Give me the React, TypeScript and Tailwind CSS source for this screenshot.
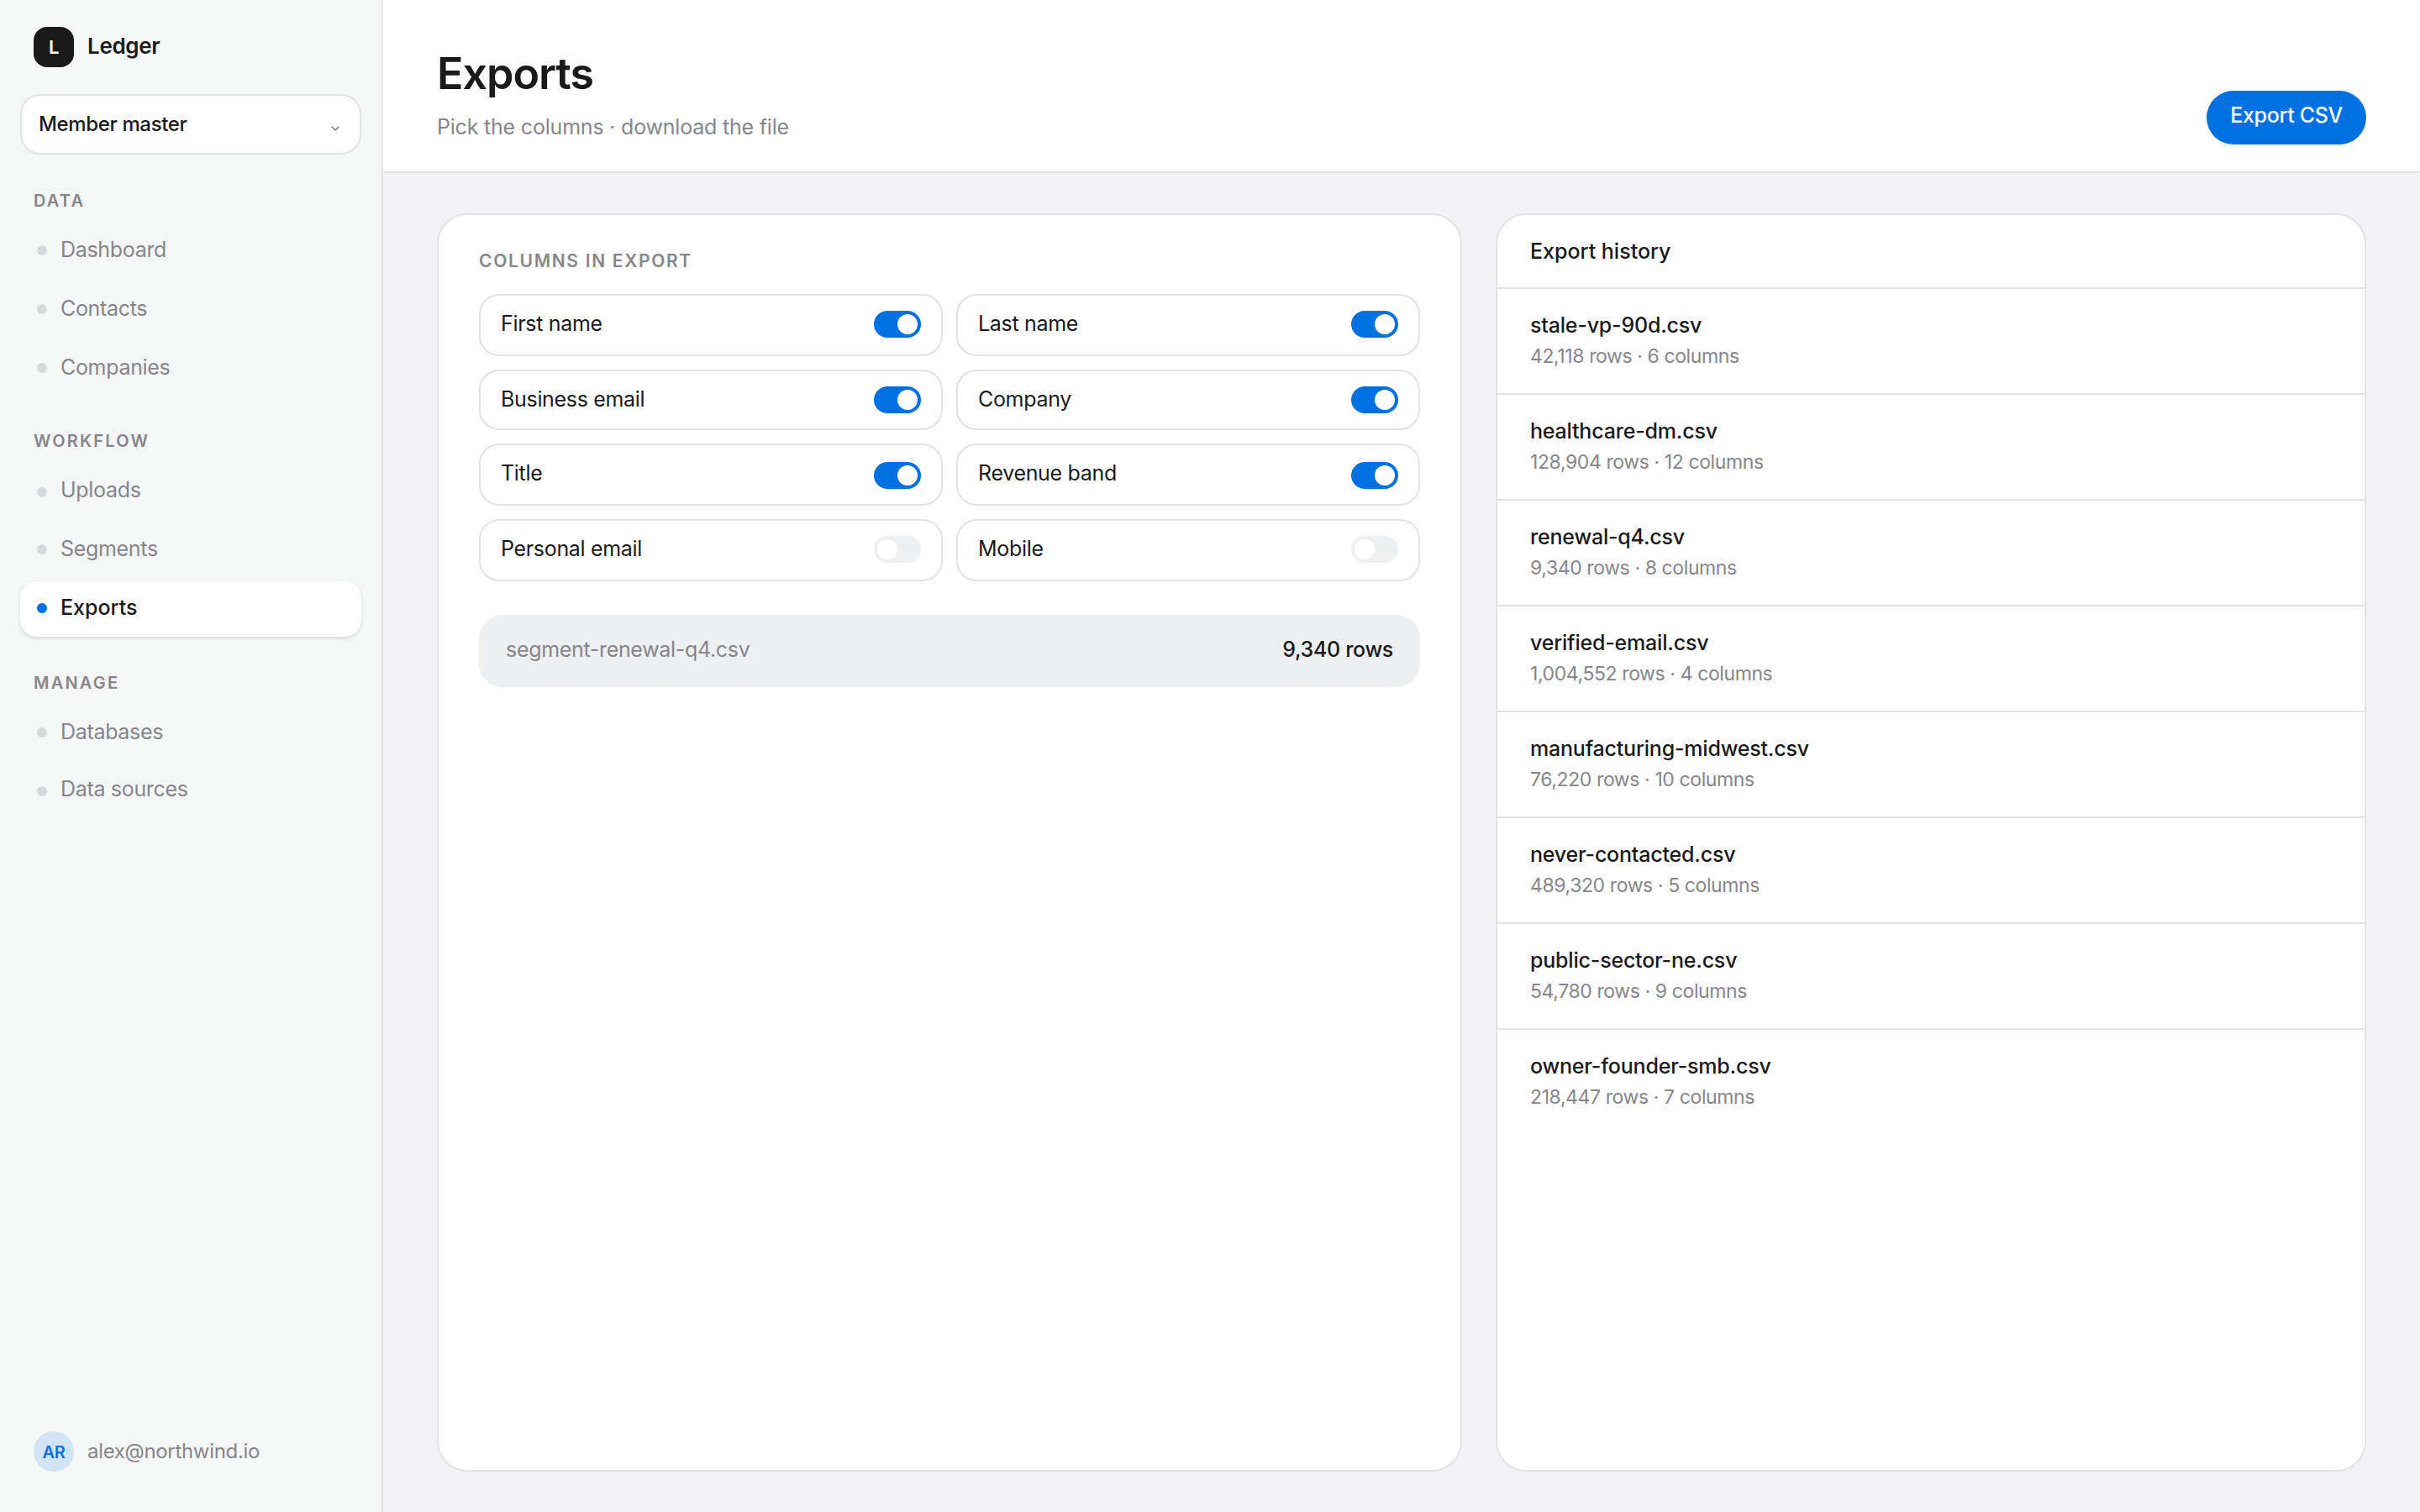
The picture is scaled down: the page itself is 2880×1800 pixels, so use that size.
import clsx from 'clsx';

const sections = [
  { title: 'Data', items: ['Dashboard', 'Contacts', 'Companies'] },
  { title: 'Workflow', items: ['Uploads', 'Segments', 'Exports'] },
  { title: 'Manage', items: ['Databases', 'Data sources'] },
];

const columns = [
  { name: 'First name', on: true },
  { name: 'Last name', on: true },
  { name: 'Business email', on: true },
  { name: 'Company', on: true },
  { name: 'Title', on: true },
  { name: 'Revenue band', on: true },
  { name: 'Personal email', on: false },
  { name: 'Mobile', on: false },
];

const history = [
  { file: 'stale-vp-90d.csv', meta: '42,118 rows · 6 columns' },
  { file: 'healthcare-dm.csv', meta: '128,904 rows · 12 columns' },
  { file: 'renewal-q4.csv', meta: '9,340 rows · 8 columns' },
  { file: 'verified-email.csv', meta: '1,004,552 rows · 4 columns' },
  { file: 'manufacturing-midwest.csv', meta: '76,220 rows · 10 columns' },
  { file: 'never-contacted.csv', meta: '489,320 rows · 5 columns' },
  { file: 'public-sector-ne.csv', meta: '54,780 rows · 9 columns' },
  { file: 'owner-founder-smb.csv', meta: '218,447 rows · 7 columns' },
];

function Toggle({ on }: { on: boolean }) {
  return (
    <span className={clsx('flex h-4 w-7 rounded-full p-0.5', on ? 'justify-end bg-[#0071e3]' : 'justify-start bg-[#eeeff1]')}>
      <span className="size-3 rounded-full bg-white" />
    </span>
  );
}

function Sidebar() {
  return (
    <aside className="flex w-[228px] shrink-0 flex-col border-r border-[#e3e3e5] bg-[#f5f7f7] px-3 pt-4 pb-6">
      <div className="flex h-6 items-center gap-2 px-2">
        <span className="flex size-6 items-center justify-center rounded-lg bg-[#1a1a1a] text-[11px] font-semibold text-white">L</span>
        <span className="text-[13px] font-semibold">Ledger</span>
      </div>

      <div className="mt-4 flex h-9 items-center justify-between rounded-xl border border-[#e3e3e5] bg-white px-2.5">
        <span className="text-[12px] font-medium tracking-[-0.015em]">Member master</span>
        <svg className="mt-[5px] mr-0.5 h-[3px] w-[5px] text-[#86868b]" viewBox="0 0 5 3" fill="none" stroke="currentColor" strokeWidth="0.8">
          <path d="M0.4 0.4 2.5 2.4 4.6 0.4" />
        </svg>
      </div>

      <nav>
        {sections.map((section) => (
          <div key={section.title} className="pt-5">
            <h2 className="px-2 text-[10px] font-semibold tracking-[0.11em] text-[#86868b] uppercase">{section.title}</h2>
            <div className="mt-1.5 flex flex-col gap-0.5">
              {section.items.map((item) => {
                const active = item === 'Exports';
                return (
                  <a
                    key={item}
                    className={clsx(
                      'flex items-center gap-2 rounded-[10px] px-2.5 py-[7px] text-[12.5px]',
                      active ? 'bg-white font-medium tracking-normal shadow-[0_1px_2px_rgba(0,0,0,0.12)]' : 'text-[#86868b]',
                    )}
                  >
                    <span className={clsx('size-1.5 rounded-full', active ? 'bg-[#0071e3]' : 'bg-[#d8d9da]')} />
                    {item}
                  </a>
                );
              })}
            </div>
          </div>
        ))}
      </nav>

      <div className="mt-auto flex items-center gap-2 px-2">
        <span className="flex size-6 items-center justify-center rounded-full bg-[#d2e3f4] text-[10px] font-semibold text-[#0071e3]">AR</span>
        <span className="text-[12px] text-[#86868b]">alex@northwind.io</span>
      </div>
    </aside>
  );
}

function ColumnsCard() {
  return (
    <section className="w-[610px] rounded-[18px] border border-[#e3e3e5] bg-white px-6 pt-5">
      <h2 className="text-[10.5px] font-semibold tracking-[0.08em] text-[#86868b] uppercase">Columns in export</h2>
      <div className="mt-[11px] grid grid-cols-2 gap-2">
        {columns.map((column) => (
          <div key={column.name} className="flex items-center justify-between rounded-xl border border-[#e3e3e5] px-3 py-2 text-[12.5px]">
            {column.name}
            <Toggle on={column.on} />
          </div>
        ))}
      </div>
      <div className="mt-5 flex items-center justify-between rounded-[14px] bg-[#eeeff1] px-4 py-3 text-[12.5px]">
        <span className="text-[#86868b]">segment-renewal-q4.csv</span>
        <span className="font-medium">9,340 rows</span>
      </div>
    </section>
  );
}

function HistoryCard() {
  return (
    <section className="flex-1 rounded-[18px] border border-[#e3e3e5] bg-white">
      <h2 className="border-b border-[#e3e3e5] px-[19.5px] pt-[13px] pb-[11px] text-[12.5px] font-medium tracking-normal">Export history</h2>
      {history.map((entry) => (
        <div key={entry.file} className="h-[63px] border-b border-[#e3e3e5] px-[19.5px] pt-[13px] last:border-b-0">
          <p className="text-[12.5px] font-medium tracking-[-0.008em]">{entry.file}</p>
          <p className="text-[11.5px] tracking-[-0.2px] text-[#86868b]">{entry.meta}</p>
        </div>
      ))}
    </section>
  );
}

export default function App() {
  return (
    <div className="h-[1800px] w-[2880px] overflow-hidden">
      <div className="flex h-[900px] w-[1440px] origin-top-left scale-200 bg-[#f3f3f6] font-['Inter',sans-serif] leading-normal tracking-[-0.01em] text-[#1a1a1a]">
        <Sidebar />
        <div className="flex flex-1 flex-col">
          <header className="flex h-[103px] items-end justify-between border-b border-[#e3e3e5] bg-white px-8 pb-4">
            <div className="pb-[0.5px]">
              <h1 className="text-[26px] font-semibold tracking-[-0.02em]">Exports</h1>
              <p className="mt-[3.75px] text-[12.5px] tracking-[-0.1px] text-[#86868b]">Pick the columns · download the file</p>
            </div>
            <button className="flex h-8 items-start rounded-full bg-[#0071e3] px-3.5 pt-[5.75px] text-[12.5px] font-medium text-white">Export CSV</button>
          </header>
          <main className="flex flex-1 gap-5 px-8 py-6">
            <ColumnsCard />
            <HistoryCard />
          </main>
        </div>
      </div>
    </div>
  );
}
